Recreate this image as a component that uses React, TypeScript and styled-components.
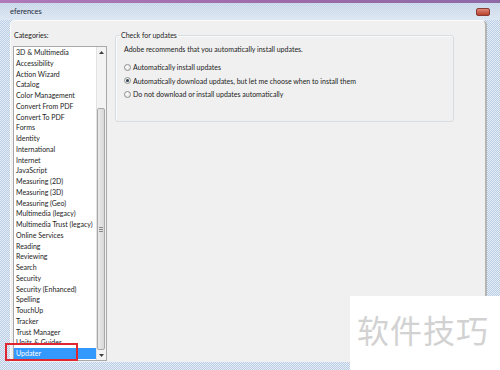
import React from "react";
import styled, { createGlobalStyle } from "styled-components";

const Global = createGlobalStyle`
  html, body { margin: 0; padding: 0; overflow: hidden; background: #fff; }
  * { box-sizing: border-box; }
`;

const FONT = `Lato, "Open Sans", "Liberation Sans", Arial, sans-serif`;
const SIZE = "7px";

const Window = styled.div`
  position: relative;
  width: 500px;
  height: 370px;
  display: flex;
  flex-direction: column;
  overflow: hidden;
  font-family: ${FONT};
  color: #1b1b1b;
  background: repeating-conic-gradient(#b9cde6 0 25%, #e6edf5 0 50%) 0 0 / 2px 2px;
`;

const TopStripe = styled.div`
  height: 3px;
  background: linear-gradient(90deg, #b07ab9, #9c6aa8 60%, #8d6aa6);
`;

const TitleBar = styled.div`
  height: 17px;
  display: flex;
  align-items: center;
  padding-left: 10px;
  font-size: 7.5px;
  color: #1e2a3a;
  background: linear-gradient(180deg, rgba(200, 214, 232, 0.6), rgba(222, 232, 243, 0.95));
`;

const Body = styled.div`
  flex: 1;
  display: flex;
  min-height: 0;
`;

const SideEdge = styled.div<{ $w: number }>`
  width: ${(p) => p.$w}px;
  flex: none;
`;

const Client = styled.div`
  flex: 1;
  background: #f0f0f0;
  border-top: 1px solid #fbfbfb;
  border-left: 1px solid #fbfbfb;
  border-right: 2px solid #b4b4b4;
  border-radius: 5px 5px 0 0;
  display: grid;
  grid-template-columns: 94px 339px;
  column-gap: 8px;
  align-items: start;
  padding: 9px 0 0 2px;
`;

const BottomEdge = styled.div`
  height: 8px;
  flex: none;
`;

const Column = styled.div`
  display: flex;
  flex-direction: column;
`;

const Label = styled.div`
  font-size: ${SIZE};
  line-height: 10px;
  padding-left: 1px;
  margin-bottom: 6px;
`;

const ListBox = styled.div`
  height: 315px;
  display: flex;
  background: #fff;
  border: 1px solid #a9a9a9;
`;

const Items = styled.div`
  flex: 1;
  display: flex;
  flex-direction: column;
`;

const Item = styled.div<{ $selected?: boolean }>`
  height: 10.75px;
  line-height: 10.75px;
  font-size: ${SIZE};
  padding-left: 2px;
  white-space: nowrap;
  color: ${(p) => (p.$selected ? "#ffffff" : "#1b1b1b")};
  background: ${(p) => (p.$selected ? "#3399ff" : "transparent")};
`;

const ScrollBar = styled.div`
  width: 10px;
  display: flex;
  flex-direction: column;
  background: #f3f3f3;
  border-left: 1px solid #e2e2e2;
`;

const ArrowButton = styled.div`
  height: 10px;
  display: flex;
  align-items: center;
  justify-content: center;
`;

const Track = styled.div`
  flex: 1;
  display: flex;
  flex-direction: column;
`;

const Thumb = styled.div`
  margin-top: 51px;
  flex: 1;
  margin-right: 1px;
  border: 1px solid #a8a8a8;
  border-radius: 2px;
  background: linear-gradient(90deg, #e9e9e9, #d9d9d9);
  display: flex;
  align-items: center;
  justify-content: center;
`;

const Grip = styled.div`
  width: 4px;
  height: 5px;
  background: repeating-linear-gradient(180deg, #8a8a8a 0 1px, transparent 1px 2px);
`;

const Group = styled.fieldset`
  margin: 0;
  padding: 4px 8px 18px 8px;
  border: 1px solid #d8dde2;
  border-radius: 3px;
  box-shadow: inset 1px 1px 0 #fafafa;
  display: flex;
  flex-direction: column;
`;

const Legend = styled.legend`
  font-size: ${SIZE};
  line-height: 10px;
  padding: 0 1px;
  margin-left: -4px;
`;

const Note = styled.div`
  font-size: ${SIZE};
  line-height: 10px;
  margin-bottom: 8px;
`;

const RadioRow = styled.div`
  height: 13.5px;
  display: flex;
  align-items: center;
  gap: 2px;
  font-size: ${SIZE};
  line-height: 10px;
  padding-bottom: 3.5px;
`;

const RadioCircle = styled.span<{ $checked?: boolean }>`
  width: 7px;
  height: 7px;
  border-radius: 50%;
  border: 1px solid #8e8f8f;
  background: radial-gradient(circle at 40% 35%, #ffffff, #dcdcdc);
  display: flex;
  align-items: center;
  justify-content: center;
  flex: none;
  &::after {
    content: "";
    width: 3px;
    height: 3px;
    border-radius: 50%;
    background: ${(p) => (p.$checked ? "#2a3b4c" : "transparent")};
  }
`;

const RedMark = styled.div`
  position: absolute;
  left: 5px;
  top: 343px;
  width: 73px;
  height: 18px;
  border: 2px solid #e0262e;
`;

const CloseBtn = styled.div`
  position: absolute;
  left: 476px;
  top: 8px;
  width: 14px;
  height: 8px;
  border-radius: 2px;
  background: linear-gradient(180deg, #dd8a78, #b8402c);
  border: 1px solid #8a3a30;
`;

const Watermark = styled.div`
  position: absolute;
  left: 350px;
  top: 296px;
  width: 150px;
  height: 74px;
  background: #ffffff;
  display: flex;
  align-items: center;
  padding-left: 7px;
  padding-bottom: 8px;
  font-family: "Noto Sans CJK SC", sans-serif;
  font-size: 32px;
  letter-spacing: 1px;
  color: #d2d2d2;
`;

const categories = [
  "3D & Multimedia",
  "Accessibility",
  "Action Wizard",
  "Catalog",
  "Color Management",
  "Convert From PDF",
  "Convert To PDF",
  "Forms",
  "Identity",
  "International",
  "Internet",
  "JavaScript",
  "Measuring (2D)",
  "Measuring (3D)",
  "Measuring (Geo)",
  "Multimedia (legacy)",
  "Multimedia Trust (legacy)",
  "Online Services",
  "Reading",
  "Reviewing",
  "Search",
  "Security",
  "Security (Enhanced)",
  "Spelling",
  "TouchUp",
  "Tracker",
  "Trust Manager",
  "Units & Guides",
  "Updater",
];

const Arrow = ({ up }: { up?: boolean }) => (
  <svg width="5" height="3" viewBox="0 0 5 3">
    <path d={up ? "M0 3 L2.5 0 L5 3 Z" : "M0 0 L2.5 3 L5 0 Z"} fill="#404040" />
  </svg>
);

const options = [
  { label: "Automatically install updates", checked: false },
  { label: "Automatically download updates, but let me choose when to install them", checked: true },
  { label: "Do not download or install updates automatically", checked: false },
];

export default function App() {
  return (
    <>
      <Global />
      <Window>
        <TopStripe />
        <TitleBar>eferences</TitleBar>
        <Body>
          <SideEdge $w={10} />
          <Client>
            <Column>
              <Label>Categories:</Label>
              <ListBox>
                <Items>
                  {categories.map((c) => (
                    <Item key={c} $selected={c === "Updater"}>
                      {c}
                    </Item>
                  ))}
                </Items>
                <ScrollBar>
                  <ArrowButton>
                    <Arrow up />
                  </ArrowButton>
                  <Track>
                    <Thumb>
                      <Grip />
                    </Thumb>
                  </Track>
                  <ArrowButton>
                    <Arrow />
                  </ArrowButton>
                </ScrollBar>
              </ListBox>
            </Column>
            <Group>
              <Legend>Check for updates</Legend>
              <Note>Adobe recommends that you automatically install updates.</Note>
              {options.map((o) => (
                <RadioRow key={o.label}>
                  <RadioCircle $checked={o.checked} />
                  {o.label}
                </RadioRow>
              ))}
            </Group>
          </Client>
          <SideEdge $w={13} />
        </Body>
        <BottomEdge />
        <CloseBtn />
        <RedMark />
        <Watermark>软件技巧</Watermark>
      </Window>
    </>
  );
}
